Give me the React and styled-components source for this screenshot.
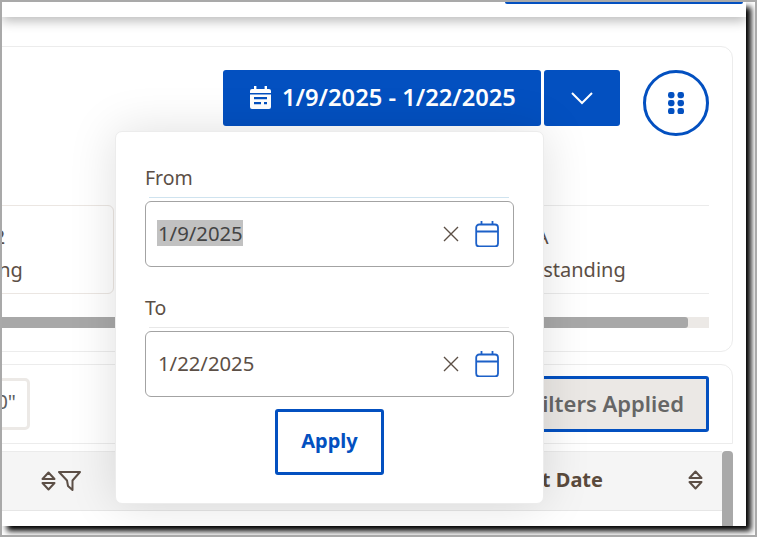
import React from "react";
import styled, { createGlobalStyle } from "styled-components";

const BLUE = "#0350c0";
const BROWN = "#5c4f46";

const Global = createGlobalStyle`
  html, body { margin: 0; padding: 0; background: #fff; }
  body { font-family: "Noto Sans", "Open Sans", sans-serif; color: ${BROWN}; }
  * { box-sizing: border-box; }
`;

const Frame = styled.div`
  width: 757px;
  height: 537px;
  border: 2px solid #a9a9a9;
  background: #fff;
  overflow: hidden;
`;

const Win = styled.div`
  position: relative;
  width: 744px;
  height: 524px;
  background: #fff;
  box-shadow: 5px 5px 6px #000;
`;

const Clip = styled.div`
  height: 100%;
  overflow: hidden;
`;

const TopBar = styled.header`
  position: relative;
  z-index: 1;
  height: 15px;
  display: flex;
  justify-content: flex-end;
  padding-right: 3px;
  background: #fff;
  box-shadow: 0 4px 12px rgba(0, 0, 0, 0.28);
`;

const TopAction = styled.div`
  width: 238px;
  height: 2px;
  background: ${BLUE};
  border-radius: 0 0 2px 2px;
`;

const Main = styled.main`
  padding: 29px 13px 0 0;
  margin-left: -102px;
`;

const Card = styled.section`
  height: 306px;
  padding: 23px 23px 0;
  border: 1px solid #ececec;
  border-radius: 12px;
  background: #fff;
`;

const Toolbar = styled.div`
  display: flex;
  justify-content: flex-end;
  align-items: flex-start;
  height: 66px;
`;

const DateButton = styled.button`
  display: flex;
  align-items: center;
  justify-content: center;
  gap: 11px;
  width: 318px;
  height: 56px;
  padding: 0 0 2px 2px;
  border: 0;
  border-radius: 3px;
  background: ${BLUE};
  color: #fff;
  font: 600 23.7px "Noto Sans", sans-serif;
`;

const ChevronButton = styled.button`
  display: flex;
  align-items: center;
  justify-content: center;
  width: 76px;
  height: 56px;
  margin-left: 3px;
  padding: 0;
  border: 0;
  border-radius: 3px;
  background: ${BLUE};
`;

const RoundButton = styled.button`
  display: flex;
  align-items: center;
  justify-content: center;
  width: 66px;
  height: 66px;
  margin-left: 23px;
  padding: 0;
  border: 3px solid ${BLUE};
  border-radius: 50%;
  background: #fff;
`;

const Tiles = styled.div`
  display: flex;
  justify-content: space-between;
  margin-top: 69px;
  height: 89px;
`;

const Tile = styled.div`
  width: ${(p) => p.$w}px;
  padding: ${(p) => (p.$open ? "17px 0 0 18px" : "17px 0 0 20px")};
  border: 1px solid #ebe6e2;
  border-width: ${(p) => (p.$open ? "1px 0" : "1px")};
  border-color: ${(p) => (p.$open ? "#ebebeb" : "#ebe6e2")};
  border-radius: ${(p) => (p.$open ? "0" : "6px")};
  font-size: 20px;
  line-height: 27px;
  white-space: nowrap;
`;

const TileValue = styled.div`
  margin: 0 0 6px ${(p) => p.$indent || 0}px;
`;

const Track = styled.div`
  height: 11px;
  margin-top: 23px;
  background: #ece9e6;
`;

const Fill = styled.div`
  height: 100%;
  background: #a8a8a8;
  border-radius: 0 3px 3px 0;
`;

const FilterCard = styled.section`
  display: flex;
  align-items: center;
  justify-content: space-between;
  height: 80px;
  margin-top: 12px;
  padding: 0 23px;
  border: 1px solid #ececec;
  border-radius: 12px 12px 0 0;
  background: #fff;
`;

const SearchChip = styled.div`
  width: 106px;
  height: 52px;
  padding: 3px 11px 0 0;
  border: 3px solid #ece9e6;
  border-radius: 5px;
  text-align: right;
  font-size: 20px;
  line-height: 36px;
  color: #5f5f5f;
  white-space: nowrap;
  overflow: hidden;
`;

const FiltersButton = styled.button`
  width: 200px;
  height: 56px;
  padding: 0 25px 2px 0;
  border: 3px solid ${BLUE};
  border-radius: 3px;
  background: #ebe8e5;
  color: #666;
  font: 600 22px "Noto Sans", sans-serif;
  text-align: right;
  white-space: nowrap;
`;

const TableArea = styled.div`
  display: flex;
  margin-top: 7px;
`;

const TableBody = styled.div`
  flex: 1;
  height: 75px;
  border-top: 1px solid #ebebeb;
`;

const HeaderRow = styled.div`
  display: flex;
  align-items: center;
  justify-content: space-between;
  height: 59px;
  padding: 0 19px 0 141px;
  background: #f5f5f5;
  border-bottom: 1px solid #e6e6e6;
`;

const HeaderIcons = styled.div`
  display: flex;
  align-items: center;
  gap: 2px;
`;

const HeaderCell = styled.div`
  display: flex;
  align-items: center;
  gap: 85px;
  font-size: 20px;
  line-height: 26px;
  padding-bottom: 2px;
  font-weight: 700;
  color: #5a4a3c;
`;

const Thumb = styled.div`
  width: 11px;
  height: 75px;
  background: #a9a9a9;
  border-radius: 4px 4px 0 0;
`;

const Popover = styled.div`
  position: absolute;
  z-index: 2;
  left: 113px;
  top: 129px;
  width: 429px;
  height: 373px;
  padding: 31px 29px 0;
  background: #fff;
  border: 1px solid #ececec;
  border-radius: 7px;
  box-shadow: 0 0 48px rgba(0, 0, 0, 0.13);
`;

const Field = styled.div`
  margin-bottom: 26px;
`;

const Label = styled.label`
  display: block;
  height: 34px;
  font-size: 19.5px;
  line-height: 30px;
`;

const LabelRule = styled.div`
  height: 1px;
  margin: 0 5px 3px 4px;
  background: ${(p) => (p.$tinted ? "#cfe3ef" : "#e8e8e8")};
`;

const InputBox = styled.div`
  display: flex;
  align-items: center;
  width: 369px;
  height: 66px;
  padding: 0 14px 0 11px;
  border: 1px solid #a3a3a3;
  border-radius: 6px;
`;

const InputText = styled.span`
  flex: 1;
  margin-bottom: 2px;
  font-size: 20.3px;
  line-height: 26px;
`;

const Plain = styled.span`
  display: inline-block;
  padding-left: 1px;
`;

const Selected = styled(Plain)`
  background: #c1c1c1;
  color: #444;
`;

const ClearIcon = styled.svg`
  width: 18px;
  height: 18px;
  margin-right: 15px;
`;

const Actions = styled.div`
  display: flex;
  justify-content: center;
  margin-top: -14px;
`;

const ApplyButton = styled.button`
  width: 109px;
  height: 66px;
  padding: 0 0 4px;
  border: 3px solid ${BLUE};
  border-radius: 3px;
  background: #fff;
  color: ${BLUE};
  font: 700 20px "Noto Sans", sans-serif;
`;

const Clear = () => (
  <ClearIcon viewBox="0 0 18 18" fill="none" stroke={BROWN} strokeWidth="1.4">
    <path d="M2 2 L16 16 M16 2 L2 16" />
  </ClearIcon>
);

const Calendar = () => (
  <svg width="24" height="26" viewBox="0 0 24 26" fill="none" stroke="#1c60c8" strokeWidth="1.8">
    <rect x="1.2" y="3.5" width="21.8" height="22" rx="3" />
    <path d="M1 10.5 H23 M6.5 0 V4 M17.5 0 V4" />
  </svg>
);

const SolidCalendar = () => (
  <svg width="21" height="23" viewBox="0 0 21 23">
    <path fill="#fff" d="M4 0h2.4v3h8.2V0H17v3h2a2 2 0 0 1 2 2v2H0V5a2 2 0 0 1 2-2h2z" />
    <path
      fill="#fff"
      fillRule="evenodd"
      d="M0 8.4h21V21a2 2 0 0 1-2 2H2a2 2 0 0 1-2-2zM4 11v2.2h13V11zM4 16v2.2h7V16zM14 16v2.2h3V16z"
    />
  </svg>
);

const Chevron = () => (
  <svg width="24" height="14" viewBox="0 0 24 14" fill="none" stroke="#fff" strokeWidth="2">
    <path d="M2 2 L12 12 L22 2" />
  </svg>
);

const Dots = () => (
  <svg width="16" height="22" viewBox="0 0 16 22" fill={BLUE}>
    {[0, 9.5].map((x) =>
      [0, 8, 16].map((y) => <rect key={`${x}-${y}`} x={x} y={y} width="6.5" height="6.2" rx="2.4" />)
    )}
  </svg>
);

const Sort = () => (
  <svg width="15" height="20" viewBox="0 0 15 20" fill="none" stroke={BROWN} strokeWidth="2" strokeLinejoin="round">
    <path d="M7.5 1.5 L13.5 8 H1.5 Z M1.5 12 H13.5 L7.5 18.5 Z" />
  </svg>
);

const Funnel = () => (
  <svg width="23" height="20" viewBox="0 0 23 20" fill="none" stroke={BROWN} strokeWidth="2" strokeLinejoin="round">
    <path d="M1 1 H22 L14.5 9.5 V19 L10 15 L9 9.5 Z" />
  </svg>
);

const DateField = ({ label, value, selected, tinted }) => (
  <Field>
    <Label>{label}</Label>
    <LabelRule $tinted={tinted} />
    <InputBox>
      <InputText>{selected ? <Selected>{value}</Selected> : <Plain>{value}</Plain>}</InputText>
      <Clear />
      <Calendar />
    </InputBox>
  </Field>
);

export default function App() {
  return (
    <>
      <Global />
      <Frame>
        <Win>
          <Clip>
            <TopBar>
              <TopAction />
            </TopBar>
            <Main>
              <Card>
                <Toolbar>
                  <DateButton>
                    <SolidCalendar />
                    1/9/2025 - 1/22/2025
                  </DateButton>
                  <ChevronButton aria-label="Open date ranges">
                    <Chevron />
                  </ChevronButton>
                  <RoundButton aria-label="Layout">
                    <Dots />
                  </RoundButton>
                </Toolbar>
                <Tiles>
                  <Tile $w={190}>
                    <TileValue $indent={3}>$1122</TileValue>
                    Pending
                  </Tile>
                  <Tile $w={219} $open>
                    <TileValue $indent={5}>N/A</TileValue>
                    Outstanding
                  </Tile>
                </Tiles>
                <Track>
                  <Fill style={{ width: `${(763 / 784) * 100}%` }} />
                </Track>
              </Card>
              <FilterCard>
                <SearchChip>"100"</SearchChip>
                <FiltersButton>3 Filters Applied</FiltersButton>
              </FilterCard>
              <TableArea>
                <TableBody>
                  <HeaderRow>
                    <HeaderIcons>
                      <Sort />
                      <Funnel />
                    </HeaderIcons>
                    <HeaderCell>
                      Start Date
                      <Sort />
                    </HeaderCell>
                  </HeaderRow>
                </TableBody>
                <Thumb />
              </TableArea>
            </Main>
          </Clip>
          <Popover>
            <DateField label="From" value="1/9/2025" selected tinted />
            <DateField label="To" value="1/22/2025" />
            <Actions>
              <ApplyButton>Apply</ApplyButton>
            </Actions>
          </Popover>
        </Win>
      </Frame>
    </>
  );
}
